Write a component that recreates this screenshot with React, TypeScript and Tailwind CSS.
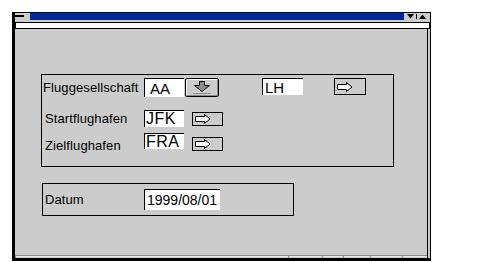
import React from 'react';

const ArrowRight = () => (
  <svg width="16" height="10" viewBox="0 0 16 10" className="block">
    <polygon
      points="0.5,2.5 9.5,2.5 9.5,0.5 15,5 9.5,9.5 9.5,7.5 0.5,7.5"
      fill="white"
      stroke="black"
      strokeWidth="1"
    />
  </svg>
);

const ArrowDown = () => (
  <svg width="20" height="14" viewBox="0 0 20 14" className="block">
    <polygon
      points="7.5,0.5 12.5,0.5 12.5,4.5 17.5,4.5 10,10.5 2.5,4.5 7.5,4.5"
      fill="#8c8c8c"
      stroke="black"
      strokeWidth="1"
    />
    <line x1="1" y1="12.5" x2="19" y2="12.5" stroke="#8c8c8c" strokeWidth="1" />
  </svg>
);

const Field = ({ text, className }: { text: string; className: string }) => (
  <div
    className={`bg-white border-l border-t border-black flex items-center leading-none ${className}`}
  >
    {text}
  </div>
);

const NavButton = ({ className }: { className: string }) => (
  <div className={`border border-black bg-[#cccccc] flex items-center pl-[2px] ${className}`}>
    <ArrowRight />
  </div>
);

const segments = [273, 34, 21, 27, 32, 25];

export default function App() {
  return (
    <div
      className="w-[478px] h-[262px] bg-white pt-[12px] pl-[12px] text-black"
      style={{ fontFamily: '"Liberation Sans", Arial, sans-serif' }}
    >
      <div className="w-[419px] h-[249px] bg-[#cccccc] border-t border-l-[3px] border-r border-b-[3px] border-black flex flex-col">
        {/* title bar */}
        <div className="h-[7px] flex">
          <div className="w-[15px] bg-[#cccccc] pt-[2px]">
            <div className="w-[9px] h-[2px] bg-black" />
          </div>
          <div className="flex-1 bg-[#00299c]" />
          <div className="w-[26px] flex items-center justify-center gap-[2px] pr-[2px]">
            <svg width="7" height="5" viewBox="0 0 7 5" className="block">
              <polygon points="0,0 7,0 3.5,4.5" fill="black" />
            </svg>
            <div className="w-px h-[5px] bg-black" />
            <svg width="7" height="5" viewBox="0 0 7 5" className="block">
              <polygon points="0,5 7,5 3.5,0.5" fill="black" />
            </svg>
          </div>
        </div>
        <div className="h-[2px]" />
        {/* menu strip */}
        <div className="h-[7px] border border-black bg-white" />

        {/* content */}
        <div className="flex-1 flex flex-col border-r border-black mr-[2px]">
          <div className="mt-[45px] ml-[26px] w-[353px] h-[93px] border border-black pl-[1px] pt-[3px] flex flex-col">
            <div className="flex items-start">
              <div className="w-[101px] h-[19px] flex items-center text-[13px] tracking-[0.1px] leading-none">
                Fluggesellschaft
              </div>
              <Field text="AA" className="w-[40px] h-[19px] pl-[5px] text-[15px]" />
              <div className="ml-[1px] w-[34px] h-[19px] border border-black rounded-[2px] bg-[#cccccc] flex items-center justify-center shadow-[inset_1px_1px_0_#ffffff,inset_-1px_-1px_0_#8a8a8a]">
                <ArrowDown />
              </div>
              <Field text="LH" className="ml-[43px] w-[41px] h-[17px] pl-[2px] text-[15px]" />
              <NavButton className="ml-[31px] w-[32px] h-[17px]" />
            </div>
            <div className="flex items-start mt-[13px]">
              <div className="w-[101px] h-[17px] flex items-center pl-[2px] text-[13px] tracking-[0.1px] leading-none">
                Startflughafen
              </div>
              <Field text="JFK" className="w-[40px] h-[17px] pl-[1px] text-[16px] tracking-[0.5px]" />
              <NavButton className="ml-[8px] mt-[2px] w-[31px] h-[14px]" />
            </div>
            <div className="flex items-start mt-[6px]">
              <div className="w-[101px] h-[24px] flex items-center pl-[2px] text-[13px] tracking-[0.1px] leading-none">
                Zielflughafen
              </div>
              <Field text="FRA" className="w-[40px] h-[16px] pl-[1px] text-[16px] tracking-[0.5px]" />
              <NavButton className="ml-[8px] mt-[4px] w-[31px] h-[14px]" />
            </div>
          </div>

          <div className="mt-[16px] ml-[27px] w-[252px] h-[33px] border border-black pl-[2px] flex items-center">
            <div className="w-[99px] text-[13px] tracking-[0.1px] leading-none">Datum</div>
            <Field text="1999/08/01" className="w-[76px] h-[21px] pl-[2px] text-[14px]" />
          </div>

          <div className="flex-1" />
          {/* status bar */}
          <div className="h-[3px] flex">
            {segments.map((w, i) => (
              <div
                key={i}
                className="h-[3px] border-t border-l border-[#8a8a8a] shadow-[inset_0_1px_0_#ececec]"
                style={{ width: w }}
              />
            ))}
          </div>
        </div>
      </div>
    </div>
  );
}
